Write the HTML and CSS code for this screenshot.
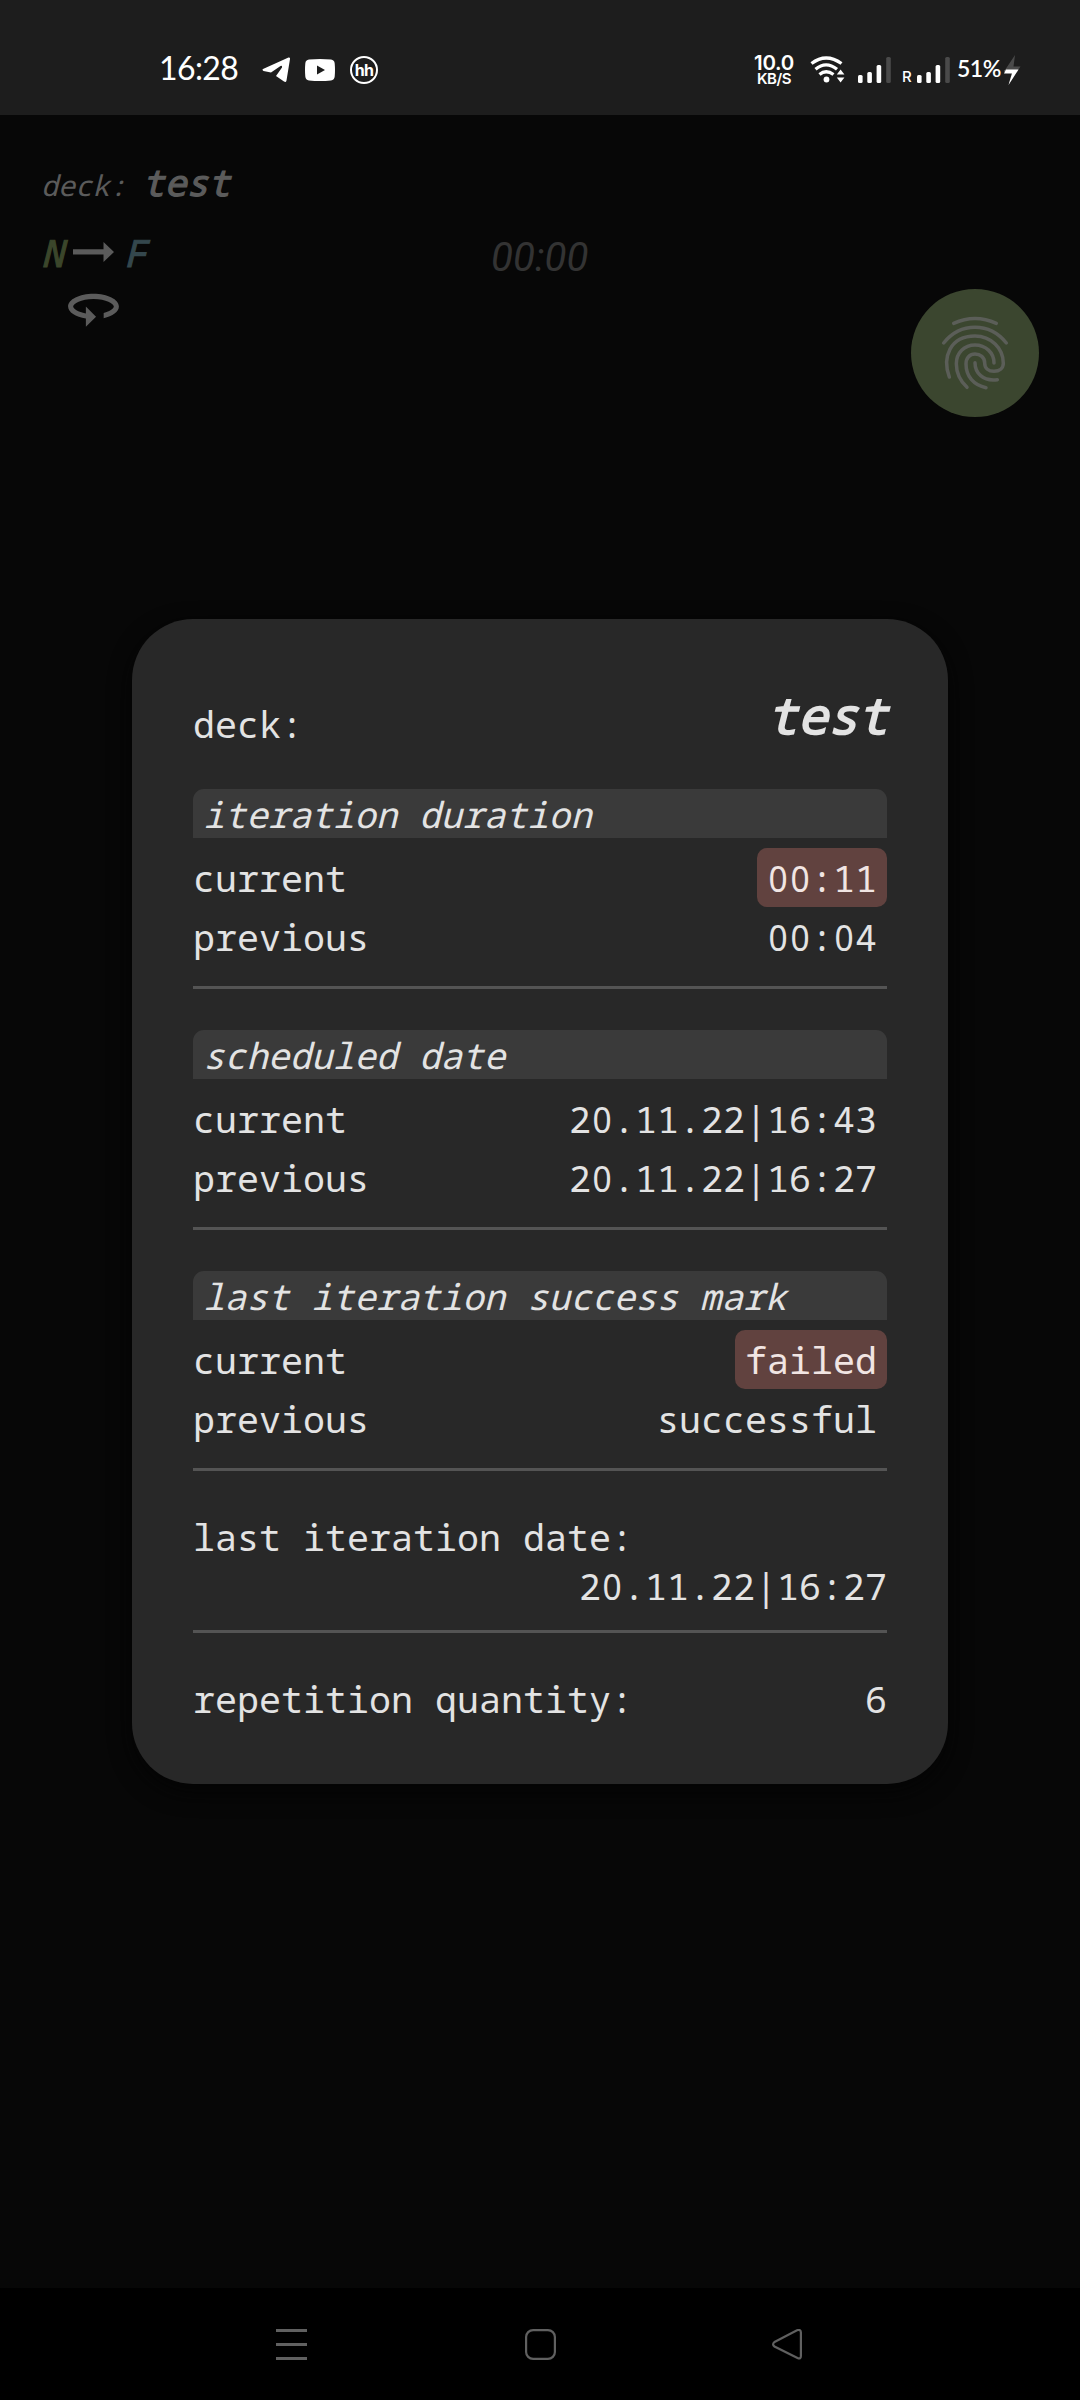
FILE: index.html
```html
<!DOCTYPE html>
<html lang="en">
<head>
<meta charset="utf-8">
<title>Deck</title>
<link rel="stylesheet" href="styles.css">
</head>
<body>
<div class="screen">
  <header class="status">
    <span class="clock">16:28</span>
    <svg class="telegram" width="28" height="26" viewBox="0 0 28 26"><path d="M1 12 26.500 .6Q28.200 .2 28 2L24.500 23.500Q24 25.800 22 24.600L14 19 20 10.500Q20.400 8.300 18.500 9L9 15.500 1.500 14Q-.3 13 1 12Z" fill="#fff"/></svg>
    <svg class="youtube" width="30" height="22" viewBox="0 0 30 22"><path fill="#fff" fill-rule="evenodd" d="M4 .6Q15-.4 26 .6 29.400 1 29.700 4.500 30.300 11 29.700 17.500 29.400 21 26 21.400 15 22.400 4 21.400 .6 21 .3 17.500-.3 11 .3 4.500 .6 1 4 .6ZM12 6.500V15.500L20 11Z"/></svg>
    <span class="hh">hh</span>
    <span class="speed"><b>10.0</b><b class="unit">KB/S</b></span>
    <svg class="wifi" width="36" height="28" viewBox="0 0 36 28" fill="none" stroke="#fff" stroke-width="3.300"><path d="M1.500 7.500Q16 -3.500 31.500 7.500M5.500 13.200Q16 4.500 27 13.200M9.500 18.500Q16 13 23.500 18.500"/><circle cx="16.500" cy="23.500" r="2.900" fill="#fff" stroke="none"/><path d="M26.800 18.500 30.600 13.500 34.400 18.500ZM26.800 21.500 30.600 26.500 34.400 21.500Z" fill="#fff" stroke="none"/></svg>
    <svg class="bars" width="33" height="27" viewBox="0 0 33 27" fill="#fff"><rect y="19" width="4.600" height="8" rx="1.500"/><rect x="9.300" y="16" width="4.600" height="11" rx="1.500"/><rect x="18.600" y="9" width="4.600" height="18" rx="1.500"/><rect x="28.200" y="1" width="4.600" height="26" rx="1.500" fill="#4a4a4a"/></svg>
    <span class="roam">R</span>
    <svg class="bars2" width="33" height="27" viewBox="0 0 33 27" fill="#fff"><rect y="19" width="4.600" height="8" rx="1.500"/><rect x="9.300" y="16" width="4.600" height="11" rx="1.500"/><rect x="18.600" y="9" width="4.600" height="18" rx="1.500"/><rect x="28.200" y="1" width="4.600" height="26" rx="1.500" fill="#4a4a4a"/></svg>
    <span class="battery">51%</span>
    <svg class="bolt" width="17" height="30" viewBox="0 0 17 30"><path d="M11 0 1 15H0L0 17H8L4.500 30 14.500 14.500 16.500 11.500H9.500Z" fill="#4a4a4a"/><path d="M2 14.500H14.500L4.500 30 8 18.500H0Z" fill="#fff"/></svg>
  </header>

  <main class="page">
    <div class="info">
      <div class="title"><span class="title-label">deck:</span><span class="title-name">test</span></div>
      <div class="direction">
        <span class="from">N</span>
        <svg width="41" height="20" viewBox="0 0 41 20"><path d="M0 7.300H30.500V0L41 10 30.500 20V12.400H0Z" fill="#5b5b5b"/></svg>
        <span class="to">F</span>
      </div>
      <svg class="turn" width="61" height="61" viewBox="0 0 24 24"><path fill="#5b5b5b" d="M12 7C6.480 7 2 9.240 2 12c0 2.240 2.940 4.130 7 4.770V20l4-4-4-4v2.730c-3.150-.56-5-1.900-5-2.730 0-1.060 3.040-3 8-3s8 1.940 8 3c0 .73-1.460 1.890-4 2.530v2.050c3.530-.77 6-2.530 6-4.580 0-2.760-4.480-5-10-5z"/></svg>
    </div>
    <div class="timer">00:00</div>
    <svg class="finger" width="128" height="128" viewBox="63 57 384 384"><circle cx="255" cy="249" r="192" fill="#3b462f"/><g fill="none" stroke="#5b5e58" stroke-width="10.500" stroke-linecap="round"><path d="M191 160Q255 131 319 160"/><path d="M161 219Q199 172 255 172T349 219"/><path d="M178 321C156 262 180 198 255 198C303 198 340 235 340 280C340 295 328 304 312 304C296 304 284 295 284 279C284 262 271 252 255 252C239 252 228 264 228 281C228 320 252 346 288 353"/><path d="M231 352C208 330 199 308 199 281C199 249 223 225 255 225C287 225 312 248 312 279"/><path d="M255 278C255 308 278 335 322 329"/></g></svg>
  </main>

  <nav class="nav">
    <svg width="31" height="31" viewBox="0 0 31 31" fill="none" stroke="#606060" stroke-width="2.800"><path d="M0 1.500H31M0 15.500H31M0 29.500H31"/></svg>
    <svg class="home" width="31" height="31" viewBox="0 0 31 31" fill="none" stroke="#606060" stroke-width="2.200"><rect x="1.100" y="1.100" width="28.800" height="28.800" rx="7"/></svg>
    <svg width="31" height="31" viewBox="0 0 31 31" fill="none" stroke="#606060" stroke-width="2.200"><path d="M2.500 13 25 1.300Q28.900 0 28.900 3.500V27Q28.900 30.500 25.500 29L2.500 17.500Q-.3 15.500 2.500 13Z"/></svg>
  </nav>

  <section class="dialog">
    <div class="deck"><span>deck:</span><span class="deck-name">test</span></div>

    <div class="group">
      <h2>iteration duration</h2>
      <div class="row"><span>current</span><span class="value alert"><i>0</i><i>0</i>:11</span></div>
      <div class="row"><span>previous</span><span class="value"><i>0</i><i>0</i>:<i>0</i>4</span></div>
    </div>
    <div class="group">
      <h2>scheduled date</h2>
      <div class="row"><span>current</span><span class="value">2<i>0</i>.11.22|16:43</span></div>
      <div class="row"><span>previous</span><span class="value">2<i>0</i>.11.22|16:27</span></div>
    </div>
    <div class="group">
      <h2>last iteration success mark</h2>
      <div class="row"><span>current</span><span class="value alert">failed</span></div>
      <div class="row"><span>previous</span><span class="value">successful</span></div>
    </div>
    <div class="last">
      <div>last iteration date:</div>
      <div class="last-date">2<i>0</i>.11.22|16:27</div>
    </div>
    <div class="row total"><span>repetition quantity:</span><span>6</span></div>
  </section>
</div>
</body>
</html>
```
FILE: styles.css
```css
* { box-sizing: border-box; }
body { margin: 0; background: #000; }
svg { display: block; flex: none; }

.screen {
  position: relative;
  width: 1080px;
  height: 2400px;
  display: flex;
  flex-direction: column;
  overflow: hidden;
  background: #070707;
  font-family: "Droid Sans Mono", "Noto Sans Mono", "DejaVu Sans Mono", monospace;
}

/* status bar */
.status {
  height: 115px;
  padding: 24px 0 0 159px;
  display: flex;
  align-items: center;
  background: #1d1d1d;
  color: #fff;
  font-family: Lato, sans-serif;
}
.clock { width: 103px; padding-bottom: 3px; font-size: 32px; line-height: 40px; letter-spacing: -0.6px; }
.telegram { margin-right: 15px; }
.youtube { margin-right: 15px; }
.hh {
  width: 28px;
  height: 28px;
  margin-right: 376px;
  border: 2px solid #fff;
  border-radius: 50%;
  font: 700 16px/24px Inter, sans-serif;
  letter-spacing: -0.6px;
  text-align: center;
}
.speed { width: 40px; margin-right: 16px; display: flex; flex-direction: column; align-items: center; font-family: Inter, sans-serif; }
.speed b { font-size: 20.5px; line-height: 18px; font-weight: 600; letter-spacing: -0.3px; }
.speed .unit { font-size: 15px; line-height: 14px; letter-spacing: -0.5px; }
.wifi { margin-right: 12px; }
.bars { margin-right: 11px; }
.roam { width: 15px; padding-top: 14px; font: 500 15px/16px Inter, sans-serif; }
.bars2 { margin-right: 7px; }
.battery { width: 47px; font: 600 23px/28px Lato, sans-serif; letter-spacing: -0.5px; padding-bottom: 4px; }

/* page behind the dialog */
.page {
  flex: 1;
  display: grid;
  grid-template-columns: 450px 1fr 169px;
  color: #5b5b5b;
}
.info { padding-left: 41px; }
.title { margin-top: 42px; height: 52px; display: flex; align-items: baseline; gap: 16px; font-style: italic; line-height: 50px; }
.title-label { font-size: 28.5px; }
.title-name { font-size: 36.5px; -webkit-text-stroke: 1.2px currentColor; }
.direction { margin-top: 18px; height: 50px; display: flex; align-items: center; font-size: 37.5px; font-style: italic; line-height: 49px; -webkit-text-stroke: 1.1px currentColor; }
.from { width: 32px; color: #3b462b; }
.to { margin-left: 10px; color: #34474d; }
.turn { margin: -1px 0 0 22px; }
.timer { padding-top: 119px; padding-left: 41px; font: italic 400 40.3px/48px Roboto, sans-serif; color: #333; }
.finger { margin-top: 174px; }

/* navigation bar */
.nav { height: 112px; padding: 41px 277px 0 276px; display: flex; justify-content: space-between; background: #000; }
.home { margin-left: 1px; }

/* dialog */
.dialog {
  position: absolute;
  left: 132px;
  top: 619px;
  width: 816px;
  height: 1165px;
  padding: 62px 61px 0;
  border-radius: 61px;
  background: #282828;
  box-shadow: 0 8px 22px #040404;
  color: #e3e3e3;
  font-size: 36.67px;
}
.deck { height: 108px; display: flex; justify-content: space-between; line-height: 69px; padding-top: 9px; }
.deck-name { margin: -10px -1px 0 0; font-size: 50.3px; font-style: italic; -webkit-text-stroke: 1.7px currentColor; }
.group { height: 200px; margin-bottom: 41px; border-bottom: 3px solid #545454; }
.group h2 {
  margin: 0 0 10px;
  height: 49px;
  padding-left: 10px;
  border-radius: 11px 11px 0 0;
  background: #3a3a3a;
  font-size: 36px;
  font-style: italic;
  font-weight: 400;
  line-height: 51px;
}
.row { height: 59px; display: flex; justify-content: space-between; line-height: 61px; }
.value { height: 59px; padding: 0 10px; border-radius: 10px; }
.alert { background: #61423f; color: #f1e5e3; }

/* open zero, without the slash of the monospace face */
.dialog i {
  display: inline-block;
  width: 22px;
  font: 400 36.4px/1 "Noto Sans", sans-serif;
  text-align: center;
  transform: scaleX(0.92);
}
.last { height: 121px; border-bottom: 3px solid #545454; padding-top: 3px; }
.last > div { height: 49px; line-height: 45px; }
.last .last-date { text-align: right; }
.total { margin-top: 36px; }
```
